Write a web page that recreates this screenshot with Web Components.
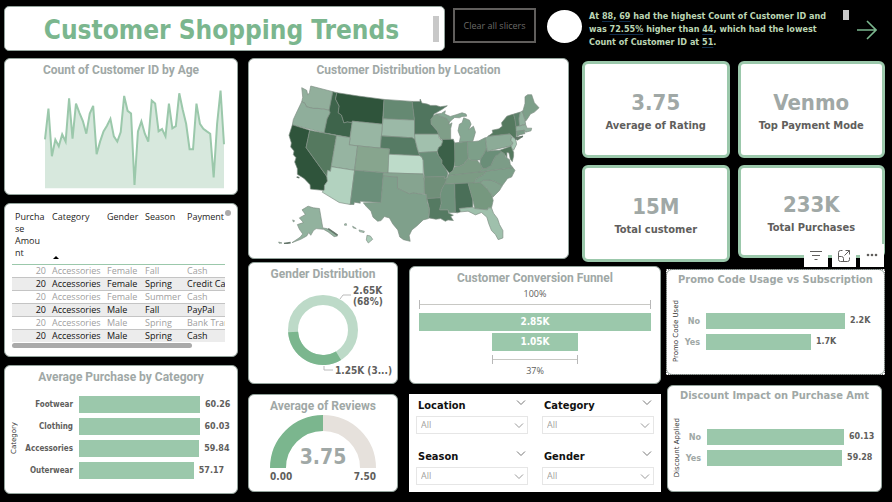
<!DOCTYPE html>
<html lang="en">
<head>
<meta charset="utf-8">
<title>Customer Shopping Trends</title>
<style>
  html { height: 100%; background: #000; }
  body { margin: 0; min-height: 100%; display: flex; background: #000;
    --mint: #9bc8ab; --green: #7bb68e; --grey: #a0a8a6; --dark: #605e5c;
    --tahoma: "DejaVu Sans Condensed", Tahoma, "Noto Sans", sans-serif;
    --verdana: "DejaVu Sans", Verdana, sans-serif;
    --segoe: "Open Sans", "Noto Sans", sans-serif;
    --din: Roboto, "Liberation Sans", sans-serif;
    font-family: var(--segoe); }
</style>
</head>
<body>
<shopping-dashboard></shopping-dashboard>
<script>
function define(name, css, render) {
  customElements.define(name, class extends HTMLElement {
    connectedCallback() {
      if (this.shadowRoot) return;
      const t = document.createElement('template');
      t.innerHTML = `<style>*{box-sizing:border-box}:host{display:block;box-sizing:border-box;min-width:0}${css}</style>${render(this)}`;
      this.attachShadow({ mode: 'open' }).append(t.content.cloneNode(true));
    }
  });
}

define('dash-card', `
  :host { display: flex; flex-direction: column; background: #fff; border: 1px solid #93a39c; border-radius: 6px; overflow: hidden; }
  h2 { margin: 0; padding-top: 3px; font: 700 12px/16px var(--din); color: var(--grey); text-align: center; white-space: nowrap; }
  :host([wide]) h2 { padding-top: 2px; font: 700 11px/16px var(--tahoma); }
  .body { flex: 1; min-height: 0; display: flex; flex-direction: column; }
  .body ::slotted(*) { flex: 1; min-height: 0; }`,
  el => `${el.hasAttribute('heading') ? `<h2>${el.getAttribute('heading')}</h2>` : ''}<div class="body"><slot></slot></div>`);

define('page-title', `
  :host { display: flex; align-items: center; background: #fff; border: 1px solid #93a39c; border-radius: 5px; padding: 0 5px; }
  h1 { flex: 1; margin: 0; padding-top: 3px; text-align: center; font: 700 26px/40px var(--tahoma); color: var(--green); white-space: nowrap; }
  i { width: 6px; height: 26px; background: #c8c8c8; }`,
  () => `<h1><slot></slot></h1><i></i>`);

define('smart-narrative', `
  p { margin: 0; font: 700 9px/13px var(--tahoma); color: #bcd6b4; }
  ::slotted(b) { text-decoration: underline #12304f 1px; text-underline-offset: 2px; }`,
  () => `<p><slot></slot></p>`);

define('clear-button', `
  button { width: 100%; height: 100%; background: #000; border: 2px solid #605e5c; color: #6c6a68; font: 400 9px/12px var(--segoe); padding: 0; }`,
  () => `<button type="button"><slot></slot></button>`);

define('next-button', `
  button { display: block; border: 0; background: none; padding: 0; width: 20px; height: 20px; }
  svg { display: block; }`,
  () => `<button type="button" aria-label="Next page"><svg width="20" height="20" viewBox="0 0 20 20" fill="none" stroke="#7bb68e" stroke-width="1.6"><path d="M0 10h18M10 1l9 9-9 9"/></svg></button>`);

define('kpi-card', `
  :host { display: flex; flex-direction: column; align-items: center; justify-content: center; background: #fff; border: 3px solid var(--mint); border-radius: 6px; padding-top: 6px; }
  strong { font: 700 22px/26px var(--tahoma); color: var(--grey); }
  span { font: 700 11px/20px var(--tahoma); color: var(--dark); white-space: nowrap; }`,
  el => `<strong>${el.getAttribute('value')}</strong><span>${el.getAttribute('label')}</span>`);

const ages = [255,162,306,256,276,240,262,131,253,147,175,200,238,177,154,300,262,231,214,193,246,262,233,124,169,177,393,231,201,238,262,138,147,231,224,246,147,222,215,116,165,208,285,285,147,208,223,231,238,370,208,108,270];
define('area-chart', `
  :host { padding: 10px 13px 6px 40px; display: flex; }
  svg { contain: size; width: 100%; height: 100%; display: block; overflow: visible; }`,
  () => {
    const pts = ages.map((y, i) => `${(i * 535 / 52).toFixed(1)} ${y - 100}`).join(' L');
    return `<svg viewBox="0 0 535 303" preserveAspectRatio="none"><path d="M${pts} L535 303 L0 303Z" fill="#d7e8dd"/><path d="M${pts}" fill="none" stroke="#9bc8ab" stroke-width="2" vector-effect="non-scaling-stroke"/></svg>`;
  });

define('bar-chart', `
  :host { display: flex; align-items: center; padding: var(--pad, 0); }
  .axis { writing-mode: vertical-rl; transform: rotate(180deg); font: 400 7px/12px var(--verdana); color: #333; white-space: nowrap; text-align: center; }
  .rows { flex: 1; display: grid; row-gap: 5px; grid-template-columns: var(--label, 60px) 1fr; align-items: center; }
  .name { font: 700 8px/12px var(--tahoma); font-size: var(--size, 8px); color: var(--name, var(--dark)); text-align: right; padding-right: 6px; }
  .line { display: flex; align-items: center; }
  .bar { background: var(--mint); height: var(--bar, 17px); flex: none; }
  .val { font: 700 8px/12px var(--verdana); color: var(--dark); padding-left: 5px; }`,
  el => {
    const data = JSON.parse(el.getAttribute('data'));
    const max = Math.max(...data.map(d => d[1]));
    return `<div class="axis">${el.getAttribute('axis')}</div><div class="rows">${data.map(d =>
      `<div class="name">${d[0]}</div><div class="line"><div class="bar" style="width:calc((100% - 37px) * ${d[1] / max})"></div><div class="val">${d[2]}</div></div>`).join('')}</div>`;
  });

define('data-table', `
  :host { padding: 7px 12px 4px 7px; position: relative; }
  .clip { overflow: hidden; }
  table { border-collapse: collapse; table-layout: fixed; width: 252px; font: 400 9px/12px var(--segoe); color: #a0a0a0; }
  th { font-weight: 400; color: #252423; text-align: left; vertical-align: top; padding: 0 3px; height: 53px; border-bottom: 1px solid var(--mint); }
  .sort { display: block; width: 0; border: 3px solid transparent; border-top: 0; border-bottom-color: #000; margin: 33px 0 0 1px; }
  td { padding: 0 3px; height: 13px; border-bottom: 1px solid #c4c4c4; white-space: nowrap; overflow: hidden; }
  td:first-child { text-align: right; }
  tr:nth-child(even) td { background: #ececec; color: #111; }
  tbody tr:last-child td { border-bottom: 0; }
  .h { height: 5px; width: 180px; margin-top: 1px; border-radius: 3px; background: #aaa; }
  .v { position: absolute; right: 6px; top: 6px; width: 6px; height: 6px; border-radius: 3px; background: #aaa; }`,
  () => `<div class="clip"><table><colgroup><col style="width:37px"><col style="width:55px"><col style="width:38px"><col style="width:42px"><col style="width:80px"></colgroup>
  <thead><tr><th>Purcha<br>se<br>Amou<br>nt</th><th>Category<span class="sort"></span></th><th>Gender</th><th>Season</th><th>Payment</th></tr></thead><tbody>${
  [['Female','Fall','Cash'],['Female','Spring','Credit Card'],['Female','Summer','Cash'],['Male','Fall','PayPal'],['Male','Spring','Bank Transfer'],['Male','Spring','Cash']]
  .map(r => `<tr><td>20</td><td>Accessories</td>${r.map(c => `<td>${c}</td>`).join('')}</tr>`).join('')}</tbody></table></div><div class="h"></div><div class="v"></div>`);

const states = [
 ['#92af9c','171 103 186 111 189 125 194 118 198 98 264 115 253 170 238 167 220 165 205 165 185 160 181 150 171 145 174 132'],
 ['#8fae9b','171 145 181 150 185 160 205 165 220 165 253 170 256 178 247 196 238 238 143 214 146 198 158 172'],
 ['#3e644b','264 115 276 118 272 137 283 158 280 178 290 185 297 208 307 205 322 207 315 252 238 238 247 196 256 178 253 170'],
 ['#2f543b','276 118 340 128 417 138 412 212 322 203 322 207 307 205 297 208 290 185 280 178 283 158 272 137'],
 ['#658972','417 138 501 144 508 200 414 196'],
 ['#9bb9a7','414 196 508 200 510 258 500 252 490 252 409 247'],
 ['#98b6a3','322 203 412 212 406 284 313 274'],
 ['#567b64','409 247 490 252 500 252 510 258 516 285 524 306 431 302 433 286 406 284'],
 ['#2f543b','143 214 195 230 184 282 246 368 248 382 239 395 238 410 197 406 196 393 178 374 158 362 158 345 150 325 154 312 146 303 148 292 138 280 140 268 133 245'],
 ['#55795f','195 230 275 246 259 340 257 353 248 350 246 368 184 282'],
 ['#96b4a1','275 246 315 252 313 274 338 277 329 350 259 339'],
 ['#87a58e','338 277 433 286 429 358 329 350'],
 ['#b2d2bf','259 339 329 350 316 452 283 446 232 415 239 408 239 395 248 382 246 368 248 350 257 353'],
 ['#6b8f7a','329 350 415 357 408 446 345 442 346 448 328 445 327 452 316 452'],
 ['#bddbc9','431 302 524 306 530 310 534 320 534 361 429 358'],
 ['#86a490','415 357 534 361 538 385 537 420 520 420 506 418 492 420 475 412 457 404 457 370 414 367'],
 ['#7fa08b','414 367 457 370 457 404 475 412 492 420 506 418 520 420 544 422 546 445 552 465 550 494 534 498 515 516 500 528 492 545 495 562 475 557 464 549 458 528 443 510 433 492 418 488 408 500 398 502 384 490 378 472 364 458 355 447 408 446'],
 ['#50755e','501 144 524 144 525 137 530 149 546 152 556 156 572 156 585 160 606 157 590 168 566 182 564 190 557 197 558 212 576 232 580 242 508 242 508 200'],
 ['#a1c0ad','508 242 580 242 582 254 592 264 588 276 580 282 576 294 520 297 510 260'],
 ['#6a8e78','520 297 574 294 580 306 590 320 590 330 602 346 608 360 603 374 596 374 598 369 537 370 534 320 530 310 524 306'],
 ['#708f79','537 370 598 369 596 374 606 374 600 388 590 405 585 422 587 432 545 434 544 422 538 420'],
 ['#557a62','545 434 587 432 588 448 583 468 608 468 610 478 624 484 616 488 624 500 608 498 600 502 586 494 572 496 551 492 553 466'],
 ['#7f9e88','566 186 574 182 584 188 604 195 612 208 611 214 620 208 616 225 616 258 586 257 580 242 576 232 558 212 557 197'],
 ['#86a893','574 182 588 180 600 172 598 182 615 189 632 184 650 178 662 182 664 188 650 189 642 193 628 192 618 200 612 207 604 195 584 188'],
 ['#86a893','655 193 672 200 677 212 670 228 684 218 690 236 686 250 682 263 642 266 645 250 638 232 642 212 650 208'],
 ['#3b6048','590 258 624 257 628 270 630 318 626 340 622 352 612 359 602 346 590 330 590 320 580 306 576 294 580 282 588 276 592 264'],
 ['#73957e','628 268 666 264 668 314 655 332 642 338 628 338'],
 ['#7d9f89','666 264 686 264 700 262 720 252 723 284 716 300 704 318 695 320 678 320 668 312'],
 ['#7c9b84','622 352 628 340 642 338 655 332 668 314 678 320 695 320 704 330 712 344 700 356 608 366 612 358'],
 ['#7c9b84','608 366 722 352 716 362 692 376 684 388 598 391 604 376'],
 ['#6f927c','598 391 628 390 630 476 612 477 608 468 583 468 588 448 585 422 590 405'],
 ['#4a6f58','628 390 668 388 682 438 682 460 642 464 646 474 636 477 630 476'],
 ['#76987f','668 388 704 386 722 402 738 422 743 440 738 462 728 462 726 468 688 464 682 438'],
 ['#9fc0ac','642 464 682 460 688 464 726 468 728 462 738 462 744 478 756 494 762 512 772 530 772 552 758 557 750 542 738 530 730 510 724 490 708 476 690 483 668 472 646 474'],
 ['#83a38e','704 386 714 380 732 379 746 382 770 396 762 410 742 430 738 422 722 402'],
 ['#7d9f89','684 388 692 376 716 362 722 352 802 342 808 350 798 370 786 374 770 396 746 382 732 379 714 380 704 386'],
 ['#7c9c87','700 356 712 344 722 344 736 336 744 318 752 305 766 292 776 300 780 310 792 318 794 332 802 342 722 352'],
 ['#6a8e78','723 284 725 293 744 291 762 290 768 294 756 304 752 305 744 318 736 336 722 344 712 344 704 330 704 318 716 300'],
 ['#8cab97','720 254 728 248 792 241 798 250 796 260 802 268 796 277 725 293'],
 ['#55795f','728 248 742 238 740 230 760 226 770 218 768 208 784 188 804 182 810 205 812 228 812 250 830 250 816 260 806 254 792 241'],
 ['#a6c6b3','798 250 810 255 813 272 804 290 796 282 802 268 796 260'],
 ['#55795f','762 290 796 278 804 296 804 308 800 324 794 316 790 298 784 296 784 312 776 300'],
 ['#5d826b','804 182 824 176 820 196 822 217 811 219 808 198'],
 ['#92b19e','824 176 831 172 838 202 840 212 822 217 820 196'],
 ['#7d9f89','831 176 838 150 838 130 846 124 858 124 866 148 880 163 866 176 854 182 848 192 840 203'],
 ['#92b19e','811 220 840 213 844 224 858 224 856 232 840 236 836 230 812 234'],
 ['#7c9c87','812 234 836 230 838 240 822 244 814 249'],
 ['#92b29e','172 468 190 457 206 462 224 464 234 522 246 524 268 536 278 546 268 548 250 534 236 526 214 524 206 530 198 544 192 536 186 546 168 556 142 566 166 550 174 540 164 526 158 512 176 506 164 492 182 482'],
 ['#a9cbb7','366 544 376 546 383 556 370 567 364 558'],
 ['#a9cbb7','299 510 304 509 305 514 299 514'], ['#a9cbb7','323 517 330 521 334 524 325 522'],
 ['#a9cbb7','342 528 358 532 357 536 344 533'], ['#92b29e','144 498 150 501 146 504'], ['#92b29e','102 564 112 567 104 568']
];
define('us-map', `
  :host { display: flex; padding: 7px 0 14px; }
  svg { contain: size; width: 100%; height: 100%; display: block; }`,
  () => `<svg viewBox="95 95 790 475" role="img" aria-label="Customers by state">${states.map(s =>
    `<polygon points="${s[1]}" fill="${s[0]}" stroke="#7f8f84" stroke-width="2" stroke-linejoin="round"/>`).join('')}
    <path d="M250 524l28 20M808 256l24-8M138 566l-20 3M156 370l8 2" stroke="#66776c" stroke-width="5" fill="none"/></svg>`);

define('donut-chart', `
  :host { display: flex; justify-content: center; }
  .plot { position: relative; width: 148px; height: 98px; }
  svg { display: block; }
  span { position: absolute; font: 700 10px/11px var(--tahoma); color: var(--dark); white-space: nowrap; }
  .a { left: 104px; top: 3px; } .b { left: 86px; top: 83px; }`,
  () => `<div class="plot"><svg width="148" height="98" viewBox="0 0 148 98" fill="none">
    <circle cx="74" cy="48" r="30" stroke="#bddac8" stroke-width="10"/>
    <path d="M89.5 73.7A30 30 0 0 1 44.1 50" stroke="#7bb68e" stroke-width="10"/>
    <path d="M91 17l3-4h8M75 84v4h9" stroke="#bbb"/></svg>
    <span class="a">2.65K<br>(68%)</span><span class="b">1.25K (3...)</span></div>`);

define('gauge-chart', `
  :host { display: flex; justify-content: center; }
  .plot { position: relative; width: 108px; }
  svg { display: block; }
  .ends { display: flex; justify-content: space-between; font: 700 10px/12px var(--tahoma); color: var(--dark); padding: 3px 1px 0; }
  strong { position: absolute; left: 0; right: 0; top: 30px; text-align: center; font: 700 21px/26px var(--tahoma); color: var(--grey); }`,
  () => `<div class="plot"><svg width="108" height="54" viewBox="0 0 108 54" fill="none" stroke-width="16">
    <path d="M9 54A45 45 0 0 1 54 9" stroke="#7bb68e"/><path d="M54 9A45 45 0 0 1 99 54" stroke="#e6e1dc"/></svg>
    <strong>3.75</strong><div class="ends"><span>0.00</span><span>7.50</span></div></div>`);

define('funnel-chart', `
  :host { padding: 2px 9px 0; display: flex; flex-direction: column; align-items: center; font: 400 9px/12px var(--segoe); color: var(--dark); }
  .rule { height: 9px; border: 1px solid #b8b8b8; border-width: 0 1px; display: flex; align-items: center; }
  .rule::before { content: ""; flex: 1; height: 1px; background: #c8c8c4; }
  .bar { background: var(--mint); color: #fff; font: 700 10px/18px var(--tahoma); text-align: center; }
  .full { width: 100%; } .part { width: 37%; }`,
  () => `<span>100%</span><div class="rule full" style="margin:0 0 4px"></div><div class="bar full">2.85K</div><div class="bar part" style="margin-top:2px">1.05K</div><div class="rule part" style="margin:4px 0 1px"></div><span>37%</span>`);

const chevron = c => `<svg width="10" height="6" viewBox="0 0 10 6" fill="none" stroke="${c}"><path d="M1 .5l4 4 4-4"/></svg>`;
define('filter-slicer', `
  .head { display: flex; justify-content: space-between; padding: 0 2px; height: 20px; }
  label { font: 700 11px/20px var(--tahoma); color: #111; }
  button { border: 0; background: none; padding: 0; height: 14px; line-height: 0; }
  .box { position: relative; }
  select { appearance: none; width: 100%; height: 18px; border: 1px solid #e6e6e6; border-radius: 0; background: #fff; color: #a19f9d; font: 400 9px/14px var(--segoe); padding: 0 4px; display: block; }
  .box svg { position: absolute; right: 4px; top: 7px; pointer-events: none; }`,
  el => { const n = el.getAttribute('label');
    return `<div class="head"><label for="s">${n}</label><button type="button" aria-label="${n} options">${chevron('#777')}</button></div><div class="box"><select id="s"><option>All</option></select>${chevron('#999')}</div>`; });

define('slicer-panel', `
  :host { background: #fff; display: grid; grid-template-columns: 1fr 1fr; column-gap: 14px; align-content: space-between; padding: 2px 7px 7px; }`,
  () => `<slot></slot>`);

define('visual-toolbar', `
  :host { display: flex; gap: 4px; }
  button { width: 24px; height: 23px; padding: 0; border: 0; background: #fff; display: grid; place-items: center; }
  svg { display: block; }`,
  () => `<button type="button" aria-label="Filters"><svg width="14" height="14" viewBox="0 0 14 14" stroke="#605e5c" fill="none"><path d="M1 2.500h12M3 6.500h8M5.500 10.500h3"/></svg></button>
   <button type="button" aria-label="Focus mode"><svg width="14" height="14" viewBox="0 0 14 14" stroke="#605e5c" fill="none"><path d="M5.500 1.500h-2a2 2 0 0 0-2 2v7a2 2 0 0 0 2 2h7a2 2 0 0 0 2-2v-2M8.500 1.500h4v4M12.500 1.500L7.500 6.500M1.500 7.500h3a2 2 0 0 1 2 2v3"/></svg></button>
   <button type="button" aria-label="More options"><svg width="14" height="14" viewBox="0 0 14 14" fill="#605e5c"><circle cx="3" cy="6" r="1.300"/><circle cx="7" cy="6" r="1.300"/><circle cx="11" cy="6" r="1.300"/></svg></button>`);

define('shopping-dashboard', `
  :host { flex: 1; display: flex; flex-direction: column; padding: 6px 7px 8px 4px; }
  header { display: flex; align-items: flex-start; height: 52px; }
  page-title { flex: 1 1 441px; height: 45px; }
  clear-button { flex: 0 0 83px; height: 35px; margin: 2px 11px 0 8px; }
  .dot { flex: none; width: 35px; height: 33px; border-radius: 50%; background: #fff; margin: 4px 7px 0 0; }
  smart-narrative { flex: 1 1 248px; margin-top: 4px; }
  .thumb { flex: none; width: 6px; height: 10px; background: #c8c8c8; margin: 4px 8px 0 6px; }
  next-button { flex: none; margin: 14px 8px 0 0; }
  main { flex: 1; display: grid; grid-template-columns: 234fr 637fr; gap: 10px; }
  .left { display: grid; grid-template-columns: minmax(0, 1fr); grid-template-rows: 137fr 153fr 129fr; gap: 8px; }
  .right { display: grid; grid-template-rows: 204fr 230fr; padding-bottom: 2px; min-width: 0; }
  .top { display: grid; grid-template-columns: 321fr 303fr; gap: 13px; }
  .top > dash-card { margin-bottom: 3px; }
  .kpis { display: grid; grid-template-columns: 1fr 1fr; grid-template-rows: 97fr 97fr; gap: 7px 8px; padding-top: 3px; }
  .kpis kpi-card:last-child { margin-bottom: 4px; }
  .bottom { display: grid; grid-template-columns: 150fr 268fr 219fr; }
  .bottom > div { display: grid; gap: 10px; min-width: 0; grid-template-columns: minmax(0, 1fr); }
  .c1 { grid-template-rows: 122fr 98fr; }
  .c2 { grid-template-rows: 118fr 98fr; padding-top: 4px; margin: 0 5px 0 11px; }
  .c3 { grid-template-rows: 106fr 107fr; padding-top: 7px; }
  .promo { position: relative; display: grid; background: #fff; outline: 1px dotted #777; outline-offset: -1px; }
  .c3 > dash-card { margin: 0 3px 0 1px; }
  .promo visual-toolbar { position: absolute; right: 1px; bottom: 100%; margin-bottom: 2px; }`,
  () => `<header>
    <page-title>Customer Shopping Trends</page-title>
    <clear-button>Clear all slicers</clear-button>
    <div class="dot"></div>
    <smart-narrative>At <b>88</b>, <b>69</b> had the highest Count of Customer ID and was <b>72.55%</b> higher than <b>44</b>, which had the lowest Count of Customer ID at <b>51</b>.</smart-narrative>
    <div class="thumb"></div><next-button></next-button>
  </header>
  <main>
    <div class="left">
      <dash-card heading="Count of Customer ID by Age"><area-chart></area-chart></dash-card>
      <dash-card><data-table></data-table></dash-card>
      <dash-card heading="Average Purchase by Category"><bar-chart axis="Category" style="--label:59px;--pad:0 0 2px 3px" data='[["Footwear",60.26,"60.26"],["Clothing",60.03,"60.03"],["Accessories",59.84,"59.84"],["Outerwear",57.17,"57.17"]]'></bar-chart></dash-card>
    </div>
    <div class="right">
      <div class="top">
        <dash-card heading="Customer Distribution by Location"><us-map></us-map></dash-card>
        <div class="kpis">
          <kpi-card value="3.75" label="Average of Rating"></kpi-card><kpi-card value="Venmo" label="Top Payment Mode"></kpi-card>
          <kpi-card value="15M" label="Total customer"></kpi-card><kpi-card value="233K" label="Total Purchases"></kpi-card>
        </div>
      </div>
      <div class="bottom">
        <div class="c1">
          <dash-card heading="Gender Distribution"><donut-chart></donut-chart></dash-card>
          <dash-card heading="Average of Reviews"><gauge-chart></gauge-chart></dash-card>
        </div>
        <div class="c2">
          <dash-card heading="Customer Conversion Funnel"><funnel-chart></funnel-chart></dash-card>
          <slicer-panel><filter-slicer label="Location"></filter-slicer><filter-slicer label="Category"></filter-slicer><filter-slicer label="Season"></filter-slicer><filter-slicer label="Gender"></filter-slicer></slicer-panel>
        </div>
        <div class="c3">
          <div class="promo"><dash-card wide heading="Promo Code Usage vs Subscription"><bar-chart axis="Promo Code Used" style="--label:24px;--bar:16px;--size:9px;--name:#a0a8a6;--pad:0 2px 0 3px" data='[["No",2.2,"2.2K"],["Yes",1.66,"1.7K"]]'></bar-chart></dash-card><visual-toolbar></visual-toolbar></div>
          <dash-card wide heading="Discount Impact on Purchase Amt"><bar-chart axis="Discount Applied" style="--label:24px;--bar:16px;--size:9px;--name:#a0a8a6;--pad:0 0 0 3px" data='[["No",60.13,"60.13"],["Yes",59.28,"59.28"]]'></bar-chart></dash-card>
        </div>
      </div>
    </div>
  </main>`);
</script>
</body>
</html>
